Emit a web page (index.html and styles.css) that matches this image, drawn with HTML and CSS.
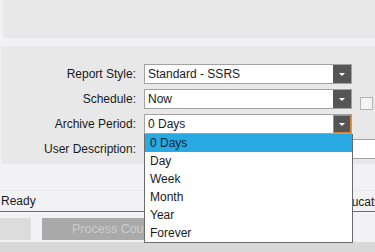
FILE: index.html
```html
<!DOCTYPE html>
<html lang="en">
<head>
  <meta charset="UTF-8">
  <meta name="viewport" content="width=device-width, initial-scale=1.0">
  <title>Report Options</title>
  <link rel="stylesheet" href="styles.css">
</head>
<body>

<div class="top-panel"></div>

<div class="form-panel">
  <div class="form-row">
    <label>Report Style:</label>
    <div class="select"><span>Standard - SSRS</span><b class="arrow"></b></div>
  </div>
  <div class="form-row">
    <label>Schedule:</label>
    <div class="select"><span>Now</span><b class="arrow"></b></div>
    <i class="check"></i>
  </div>
  <div class="form-row">
    <label>Archive Period:</label>
    <div class="select"><span>0 Days</span><b class="arrow focus"></b></div>
  </div>
  <div class="form-row">
    <label>User Description:</label>
    <div class="text-input"></div>
  </div>
</div>

<div class="status-bar">
  <span class="status">Ready</span>
  <span class="status-right">Education</span>
</div>

<div class="button-row">
  <button class="btn btn-light"></button>
  <button class="btn btn-disabled" disabled>Process Count...</button>
</div>

<div class="bottom-strip"></div>

<ul class="dropdown">
  <li class="selected">0 Days</li>
  <li>Day</li>
  <li>Week</li>
  <li>Month</li>
  <li>Year</li>
  <li>Forever</li>
</ul>

</body>
</html>
```

FILE: styles.css
```css
body {
  margin: 0;
  width: 375px;
  height: 252px;
  overflow: hidden;
  background: #f2f2f4;
  font-family: "Liberation Sans", Arial, sans-serif;
  font-size: 12px;
  color: #1a1a1a;
  position: relative;
}
.top-panel {
  margin-left: 3px;
  height: 38px;
  background: #e8e8e8;
  border-bottom-left-radius: 4px;
}
.form-panel {
  margin: 8px 0 0 1px;
  height: 118px;
  box-sizing: border-box;
  padding-top: 18px;
  background: #e8e8e8;
  border-bottom-left-radius: 4px;
  display: flex;
  flex-direction: column;
  gap: 5px;
}
.form-row {
  display: flex;
  align-items: center;
  height: 20px;
}
.form-row label {
  width: 135px;
  text-align: right;
  margin-right: 8px;
}
.select {
  width: 208px;
  height: 20px;
  box-sizing: border-box;
  border: 1px solid #a2a2a2;
  background: #fff;
  display: flex;
  align-items: center;
  justify-content: space-between;
}
.select span {
  padding-left: 3px;
}
.arrow {
  width: 18px;
  height: 18px;
  box-sizing: border-box;
  background: #555;
  position: relative;
}
.arrow::after {
  content: "";
  position: absolute;
  left: 6px;
  top: 8px;
  border-left: 3px solid transparent;
  border-right: 3px solid transparent;
  border-top: 3px solid #fff;
}
.arrow.focus {
  border: 1px solid #d9822b;
}
.arrow.focus::after {
  left: 5px;
  top: 7px;
}
.check {
  width: 13px;
  height: 13px;
  box-sizing: border-box;
  margin: 8px 0 0 8px;
  border: 1px solid #b4b4b4;
  background: #f4f4f4;
}
.text-input {
  flex: 1;
  height: 20px;
  box-sizing: border-box;
  border: 1px solid #a2a2a2;
  border-right: none;
  background: #fff;
}
.status-bar {
  margin-top: 26px;
  height: 22px;
  box-sizing: border-box;
  border-top: 1px solid #e9e9eb;
  border-bottom: 1px solid #2f7fc8;
  position: relative;
  display: flex;
  align-items: center;
}
.status {
  padding-left: 1px;
}
.status-right {
  position: absolute;
  left: 337px;
  top: 4px;
  white-space: nowrap;
}
.button-row {
  margin-top: 6px;
  display: flex;
  gap: 11px;
  height: 22px;
}
.btn {
  border: none;
  padding: 0;
  height: 22px;
  font-family: "Liberation Sans", Arial, sans-serif;
  font-size: 12.5px;
}
.btn-light {
  width: 31px;
  background: #dcdcdc;
}
.btn-disabled {
  width: 200px;
  background: #a9a9a9;
  color: #cdcdcd;
  text-align: left;
  padding-left: 30px;
}
.bottom-strip {
  margin-top: 2px;
  height: 10px;
  background: #d8d8d8;
}
.dropdown {
  position: absolute;
  left: 144px;
  top: 134px;
  width: 209px;
  margin: 0;
  padding: 0;
  list-style: none;
  box-sizing: border-box;
  border: 1px solid #6a6a6a;
  border-top: none;
  background: #fff;
}
.dropdown li {
  height: 18px;
  line-height: 18px;
  padding-left: 5px;
}
.dropdown li.selected {
  background: #29a9e1;
  color: #0f2533;
}
```
